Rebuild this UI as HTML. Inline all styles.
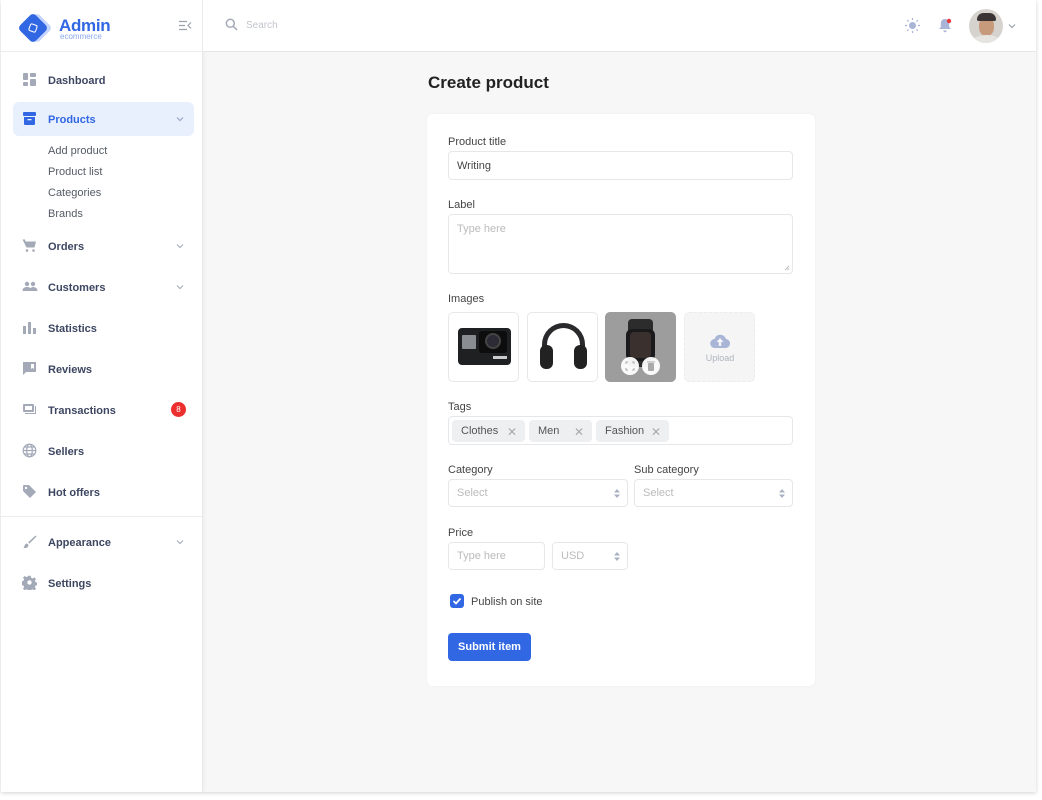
<!DOCTYPE html>
<html><head><meta charset="utf-8"><style>
*{box-sizing:border-box;margin:0;padding:0}
body{width:1042px;height:800px;background:#fff;font-family:"Liberation Sans",sans-serif;position:relative;overflow:hidden;color:#333}
.frame{position:absolute;left:1px;top:0;width:1035px;height:792px;background:#f7f7f7;box-shadow:0 1px 4px rgba(0,0,0,.18);overflow:hidden}
.side{position:absolute;left:0;top:0;width:202px;height:792px;background:#fff;border-right:1px solid #e9e9ec;box-shadow:1px 0 4px rgba(0,0,0,.05)}
.head{position:absolute;left:202px;top:0;right:0;height:52px;background:#fff;border-bottom:1px solid #e6e6e9}
.logohead{position:absolute;left:0;top:0;width:202px;height:52px;border-bottom:1px solid #ececef}
.nav{position:absolute;left:12px;width:181px;height:34px;border-radius:6px;font-size:11px;font-weight:bold;color:#3d4661}
.nav span.t{position:absolute;left:35px;top:12px}
.nav svg.i{position:absolute;left:9px;top:9px}
.chev{position:absolute;right:9px;top:12px}
.act{background:#e8effd;color:#3167e3}
.sub{position:absolute;left:47px;font-size:11px;color:#555b66}
.lbl{position:absolute;font-size:11px;color:#444;left:21px}
.inp{position:absolute;background:#fff;border:1px solid #e6e7ea;border-radius:4px;font-size:11px;color:#bbb;padding-left:8px;display:flex;align-items:center}
.card{position:absolute;left:426px;top:114px;width:388px;height:572px;background:#fff;border-radius:6px;box-shadow:0 0 3px rgba(0,0,0,.04)}
.img{position:absolute;top:198px;width:71px;height:70px;border:1px solid #e8e8ea;border-radius:5px;background:#fff}
.tag{position:absolute;top:3px;height:22px;background:#eeeff1;border-radius:4px;font-size:11px;color:#555;padding:5px 0 0 9px}
.tag i{position:absolute;right:8px;top:5px;font-style:normal;color:#aaa;font-size:12px}
.arr{position:absolute;right:6px;top:8px}
</style></head><body>
<div class="frame">
<div class="side">
 <div class="logohead">
  <div style="position:absolute;left:25px;top:17px;width:22px;height:22px;background:#c6d5fb;border-radius:4px;transform:rotate(45deg)"></div>
  <div style="position:absolute;left:21px;top:17px;width:22px;height:22px;background:#3167e3;border-radius:4px;transform:rotate(45deg)"></div>
  <div style="position:absolute;left:28px;top:24px;width:8px;height:8px;border:1.5px solid #fff;border-radius:2px;transform:rotate(20deg)"></div>
  <div style="position:absolute;left:58px;top:16px;font-size:17px;font-weight:bold;color:#3167e3;letter-spacing:-.3px">Admin</div>
  <div style="position:absolute;left:59px;top:32px;font-size:8px;color:#8aa8ef">ecommerce</div>
  <svg style="position:absolute;left:177px;top:20px" width="14" height="11" viewBox="0 0 14 11" fill="none" stroke="#9aa0ad" stroke-width="1.2"><path d="M1 1.5h8M1 5.5h6M1 9.5h8M13 2.5l-3 3 3 3"/></svg>
 </div>
 <div class="nav" style="top:63px"><svg class="i" width="15" height="15" viewBox="0 0 15 15" fill="#a3a9b7"><rect x="1" y="1" width="5" height="7" rx="1"/><rect x="8" y="1" width="6" height="4" rx="1"/><rect x="1" y="10" width="5" height="4" rx="1"/><rect x="8" y="7" width="6" height="7" rx="1"/></svg><span class="t">Dashboard</span></div>
 <div class="nav act" style="top:102px"><svg class="i" width="15" height="15" viewBox="0 0 15 15" fill="#3167e3"><rect x="1" y="1" width="13" height="4" rx="1"/><path d="M2 6h11v7a1 1 0 0 1-1 1H3a1 1 0 0 1-1-1z"/><rect x="5.5" y="8" width="4" height="1.3" fill="#e8effd"/></svg><span class="t">Products</span><svg class="chev" width="10" height="10" viewBox="0 0 10 10" fill="none" stroke="#9aa6c8" stroke-width="1.2"><path d="M2 3.5l3 3 3-3"/></svg></div>
 <div class="sub" style="top:145px">Add product</div>
 <div class="sub" style="top:166px">Product list</div>
 <div class="sub" style="top:187px">Categories</div>
 <div class="sub" style="top:208px">Brands</div>
 <div class="nav" style="top:229px"><svg class="i" width="15" height="15" viewBox="0 0 15 15" fill="#a3a9b7"><path d="M0.5 1.5h2.5l.6 2H14l-1.5 6H4.5z"/><circle cx="5" cy="12.5" r="1.3"/><circle cx="11.5" cy="12.5" r="1.3"/></svg><span class="t">Orders</span><svg class="chev" width="10" height="10" viewBox="0 0 10 10" fill="none" stroke="#aab0bd" stroke-width="1.2"><path d="M2 3.5l3 3 3-3"/></svg></div>
 <div class="nav" style="top:270px"><svg class="i" width="16" height="15" viewBox="0 0 16 15" fill="#a3a9b7"><circle cx="5" cy="5" r="2.2"/><circle cx="11" cy="5" r="2.2"/><path d="M0.5 12c0-3 2-4 4.5-4s4.5 1 4.5 4z"/><path d="M8 12c0-2.5 1-4 3-4s4.5 1 4.5 4z"/></svg><span class="t">Customers</span><svg class="chev" width="10" height="10" viewBox="0 0 10 10" fill="none" stroke="#aab0bd" stroke-width="1.2"><path d="M2 3.5l3 3 3-3"/></svg></div>
 <div class="nav" style="top:311px"><svg class="i" width="15" height="15" viewBox="0 0 15 15" fill="#a3a9b7"><rect x="1" y="6" width="3" height="8"/><rect x="6" y="2" width="3" height="12"/><rect x="11" y="8" width="3" height="6"/></svg><span class="t">Statistics</span></div>
 <div class="nav" style="top:352px"><svg class="i" width="15" height="15" viewBox="0 0 15 15" fill="#a3a9b7"><path d="M1 1h13v10H4l-3 3z"/><path d="M9 3h3v5l-1.5-1-1.5 1z" fill="#fff"/></svg><span class="t">Reviews</span></div>
 <div class="nav" style="top:393px"><svg class="i" width="16" height="15" viewBox="0 0 16 15" fill="#a3a9b7"><rect x="1" y="2" width="11" height="8" rx="1"/><rect x="3" y="4" width="7" height="4" fill="#fff"/><path d="M14 4v8H3v-1h10V4z"/></svg><span class="t">Transactions</span><div style="position:absolute;left:158px;top:9px;width:15px;height:15px;border-radius:50%;background:#ec2f2f;color:#fff;font-size:8px;font-weight:normal;text-align:center;line-height:15px">8</div></div>
 <div class="nav" style="top:434px"><svg class="i" width="15" height="15" viewBox="0 0 15 15" fill="none" stroke="#a3a9b7" stroke-width="1.2"><circle cx="7.5" cy="7.5" r="6.3"/><ellipse cx="7.5" cy="7.5" rx="2.8" ry="6.3"/><path d="M1.2 7.5h12.6M2.3 4h10.4M2.3 11h10.4"/></svg><span class="t">Sellers</span></div>
 <div class="nav" style="top:475px"><svg class="i" width="15" height="15" viewBox="0 0 15 15" fill="#a3a9b7"><path d="M1 2a1 1 0 0 1 1-1h5l7 7-6 6-7-7z"/><circle cx="4" cy="4" r="1.2" fill="#fff"/></svg><span class="t">Hot offers</span></div>
 <div style="position:absolute;left:0;top:516px;width:202px;height:1px;background:#ececef"></div>
 <div class="nav" style="top:525px"><svg class="i" width="15" height="15" viewBox="0 0 15 15" fill="#a3a9b7"><path d="M13.5 1.5l1 1-7 7-1.5-1z"/><path d="M5 9.5l1.5 1.5c0 2-2 3.5-5 3 1-1 1-4.5 3.5-4.5z"/></svg><span class="t">Appearance</span><svg class="chev" width="10" height="10" viewBox="0 0 10 10" fill="none" stroke="#aab0bd" stroke-width="1.2"><path d="M2 3.5l3 3 3-3"/></svg></div>
 <div class="nav" style="top:566px"><svg class="i" width="15" height="15" viewBox="0 0 15 15" fill="#a3a9b7"><path d="M6.3 0.8h2.4l.4 2 1.5.7 1.7-1.1 1.7 1.7-1.1 1.7.7 1.5 2 .4v2.4l-2 .4-.7 1.5 1.1 1.7-1.7 1.7-1.7-1.1-1.5.7-.4 2H6.3l-.4-2-1.5-.7-1.7 1.1-1.7-1.7 1.1-1.7-.7-1.5-2-.4V6.3l2-.4.7-1.5-1.1-1.7 1.7-1.7 1.7 1.1 1.5-.7z"/><circle cx="7.5" cy="7.5" r="2.2" fill="#fff"/></svg><span class="t">Settings</span></div>
</div>
<div class="head">
 <svg style="position:absolute;left:22px;top:18px" width="13" height="13" viewBox="0 0 13 13" fill="none" stroke="#a3a9b7" stroke-width="1.5"><circle cx="5.3" cy="5.3" r="4"/><path d="M8.3 8.3l3.7 3.7"/></svg>
 <div style="position:absolute;left:43px;top:20px;font-size:10px;color:#c2c5cc">Search</div>
 <svg style="position:absolute;left:701px;top:17px" width="17" height="17" viewBox="0 0 17 17" fill="#a9b5d6" stroke="#a9b5d6" stroke-width="1.2"><circle cx="8.5" cy="8.5" r="3.5" stroke="none"/><path d="M8.5 1v2M8.5 14v2M1 8.5h2M14 8.5h2M3.2 3.2l1.4 1.4M12.4 12.4l1.4 1.4M3.2 13.8l1.4-1.4M12.4 4.6l1.4-1.4"/></svg>
 <svg style="position:absolute;left:735px;top:18px" width="14" height="15" viewBox="0 0 14 15" fill="#a9b5d6"><path d="M7 1c2.8 0 4.2 2 4.2 4.5v3.5l1.8 2H1l1.8-2V5.5C2.8 3 4.2 1 7 1z"/><path d="M5.3 12.5h3.4a1.7 1.7 0 0 1-3.4 0z"/><circle cx="11" cy="3" r="2.2" fill="#e83a3a"/></svg>
 <div style="position:absolute;left:766px;top:9px;width:34px;height:34px;border-radius:50%;background:#d6d3cf;overflow:hidden">
  <div style="position:absolute;left:10px;top:8px;width:15px;height:19px;border-radius:45%;background:#c79a7c"></div>
  <div style="position:absolute;left:8px;top:4px;width:19px;height:8px;border-radius:8px 8px 2px 2px;background:#3a3534"></div>
  <div style="position:absolute;left:4px;top:26px;width:27px;height:12px;border-radius:50%;background:#e6e4e1"></div>
 </div>
 <svg style="position:absolute;left:804px;top:21px" width="10" height="10" viewBox="0 0 10 10" fill="none" stroke="#9aa0ad" stroke-width="1.2"><path d="M2 3.5l3 3 3-3"/></svg>
</div>
<div style="position:absolute;left:427px;top:73px;font-size:17px;font-weight:bold;color:#222">Create product</div>
<div class="card">
 <div class="lbl" style="top:22px">Product title</div>
 <div class="inp" style="left:21px;top:37px;width:345px;height:29px;color:#444">Writing</div>
 <div class="lbl" style="top:85px">Label</div>
 <div class="inp" style="left:21px;top:100px;width:345px;height:60px;align-items:flex-start;padding-top:8px">Type here<svg style="position:absolute;right:2px;bottom:2px" width="6" height="6" viewBox="0 0 6 6" stroke="#bbb"><path d="M5 1L1 5M5 3.5L3.5 5"/></svg></div>
 <div class="lbl" style="top:179px">Images</div>
 <div class="img" style="left:21px">
  <div style="position:absolute;left:9px;top:15px;width:53px;height:37px;background:#1f2022;border-radius:4px"></div>
  <div style="position:absolute;left:13px;top:22px;width:14px;height:14px;background:#8a8e92;border-radius:1px"></div>
  <div style="position:absolute;left:30px;top:18px;width:28px;height:22px;background:#0d0d0e;border-radius:3px"></div>
  <div style="position:absolute;left:36px;top:20px;width:16px;height:16px;background:#2c2a35;border-radius:50%;border:2px solid #444"></div>
  <div style="position:absolute;left:44px;top:43px;width:14px;height:3px;background:#ccc"></div>
 </div>
 <div class="img" style="left:100px">
  <div style="position:absolute;left:14px;top:10px;width:43px;height:42px;border:5px solid #2a2a2c;border-bottom:none;border-radius:22px 22px 0 0"></div>
  <div style="position:absolute;left:12px;top:32px;width:13px;height:24px;background:#222;border-radius:6px"></div>
  <div style="position:absolute;left:46px;top:32px;width:13px;height:24px;background:#222;border-radius:6px"></div>
 </div>
 <div class="img" style="left:178px;background:#9d9d9d;border-color:#9d9d9d">
  <div style="position:absolute;left:22px;top:6px;width:25px;height:48px;background:#2c2c2c;border-radius:4px"></div>
  <div style="position:absolute;left:20px;top:16px;width:29px;height:32px;background:#1a1a1c;border-radius:6px"></div>
  <div style="position:absolute;left:24px;top:19px;width:21px;height:26px;background:#3a302e;border-radius:4px"></div>
  <div style="position:absolute;left:15px;top:44px;width:18px;height:18px;background:#fff;border-radius:50%;opacity:.95"></div>
  <div style="position:absolute;left:36px;top:44px;width:18px;height:18px;background:#fff;border-radius:50%;opacity:.95"></div>
  <svg style="position:absolute;left:19px;top:48px" width="10" height="10" viewBox="0 0 10 10" fill="none" stroke="#aaa" stroke-width="1"><path d="M1 3V1h2M7 1h2v2M9 7v2H7M3 9H1V7"/></svg>
  <svg style="position:absolute;left:41px;top:48px" width="8" height="10" viewBox="0 0 8 10" fill="#aaa"><rect x="1" y="2" width="6" height="8" rx="1"/><rect x="0" y="0.5" width="8" height="1"/></svg>
 </div>
 <div class="img" style="left:257px;background:#f5f5f6;border:1px dashed #ececee">
  <svg style="position:absolute;left:25px;top:21px" width="20" height="14" viewBox="0 0 20 14" fill="#a9b5d6"><path d="M5 14a4.5 4.5 0 0 1-.5-9A6 6 0 0 1 16 5a4.5 4.5 0 0 1-1 9z"/><path d="M10 4l-3.5 4h2.3v4h2.4V8h2.3z" fill="#f5f5f6"/></svg>
  <div style="position:absolute;left:0;width:70px;top:40px;text-align:center;font-size:9px;color:#b0b4bd">Upload</div>
 </div>
 <div class="lbl" style="top:287px">Tags</div>
 <div class="inp" style="left:21px;top:302px;width:345px;height:29px">
  <div class="tag" style="left:3px;width:73px">Clothes<i>✕</i></div>
  <div class="tag" style="left:80px;width:63px">Men<i>✕</i></div>
  <div class="tag" style="left:147px;width:73px">Fashion<i>✕</i></div>
 </div>
 <div class="lbl" style="top:350px">Category</div>
 <div class="lbl" style="top:350px;left:207px">Sub category</div>
 <div class="inp" style="left:21px;top:365px;width:180px;height:28px">Select<svg class="arr" width="8" height="11" viewBox="0 0 8 11" fill="#a9b0c2"><path d="M4 1l3 3.5H1zM4 10l3-3.5H1z"/></svg></div>
 <div class="inp" style="left:207px;top:365px;width:159px;height:28px">Select<svg class="arr" width="8" height="11" viewBox="0 0 8 11" fill="#a9b0c2"><path d="M4 1l3 3.5H1zM4 10l3-3.5H1z"/></svg></div>
 <div class="lbl" style="top:413px">Price</div>
 <div class="inp" style="left:21px;top:428px;width:97px;height:28px">Type here</div>
 <div class="inp" style="left:125px;top:428px;width:76px;height:28px">USD<svg class="arr" width="8" height="11" viewBox="0 0 8 11" fill="#a9b0c2"><path d="M4 1l3 3.5H1zM4 10l3-3.5H1z"/></svg></div>
 <div style="position:absolute;left:23px;top:480px;width:14px;height:14px;background:#3167e3;border-radius:3px"><svg width="14" height="14" viewBox="0 0 14 14" fill="none" stroke="#fff" stroke-width="1.8"><path d="M3.5 7l2.5 2.5 4.5-5"/></svg></div>
 <div style="position:absolute;left:44px;top:482px;font-size:11px;color:#444">Publish on site</div>
 <div style="position:absolute;left:21px;top:519px;width:83px;height:28px;background:#3167e3;border-radius:4px;color:#fff;font-size:11px;font-weight:bold;text-align:center;line-height:28px">Submit item</div>
</div>
</div>
</body></html>
